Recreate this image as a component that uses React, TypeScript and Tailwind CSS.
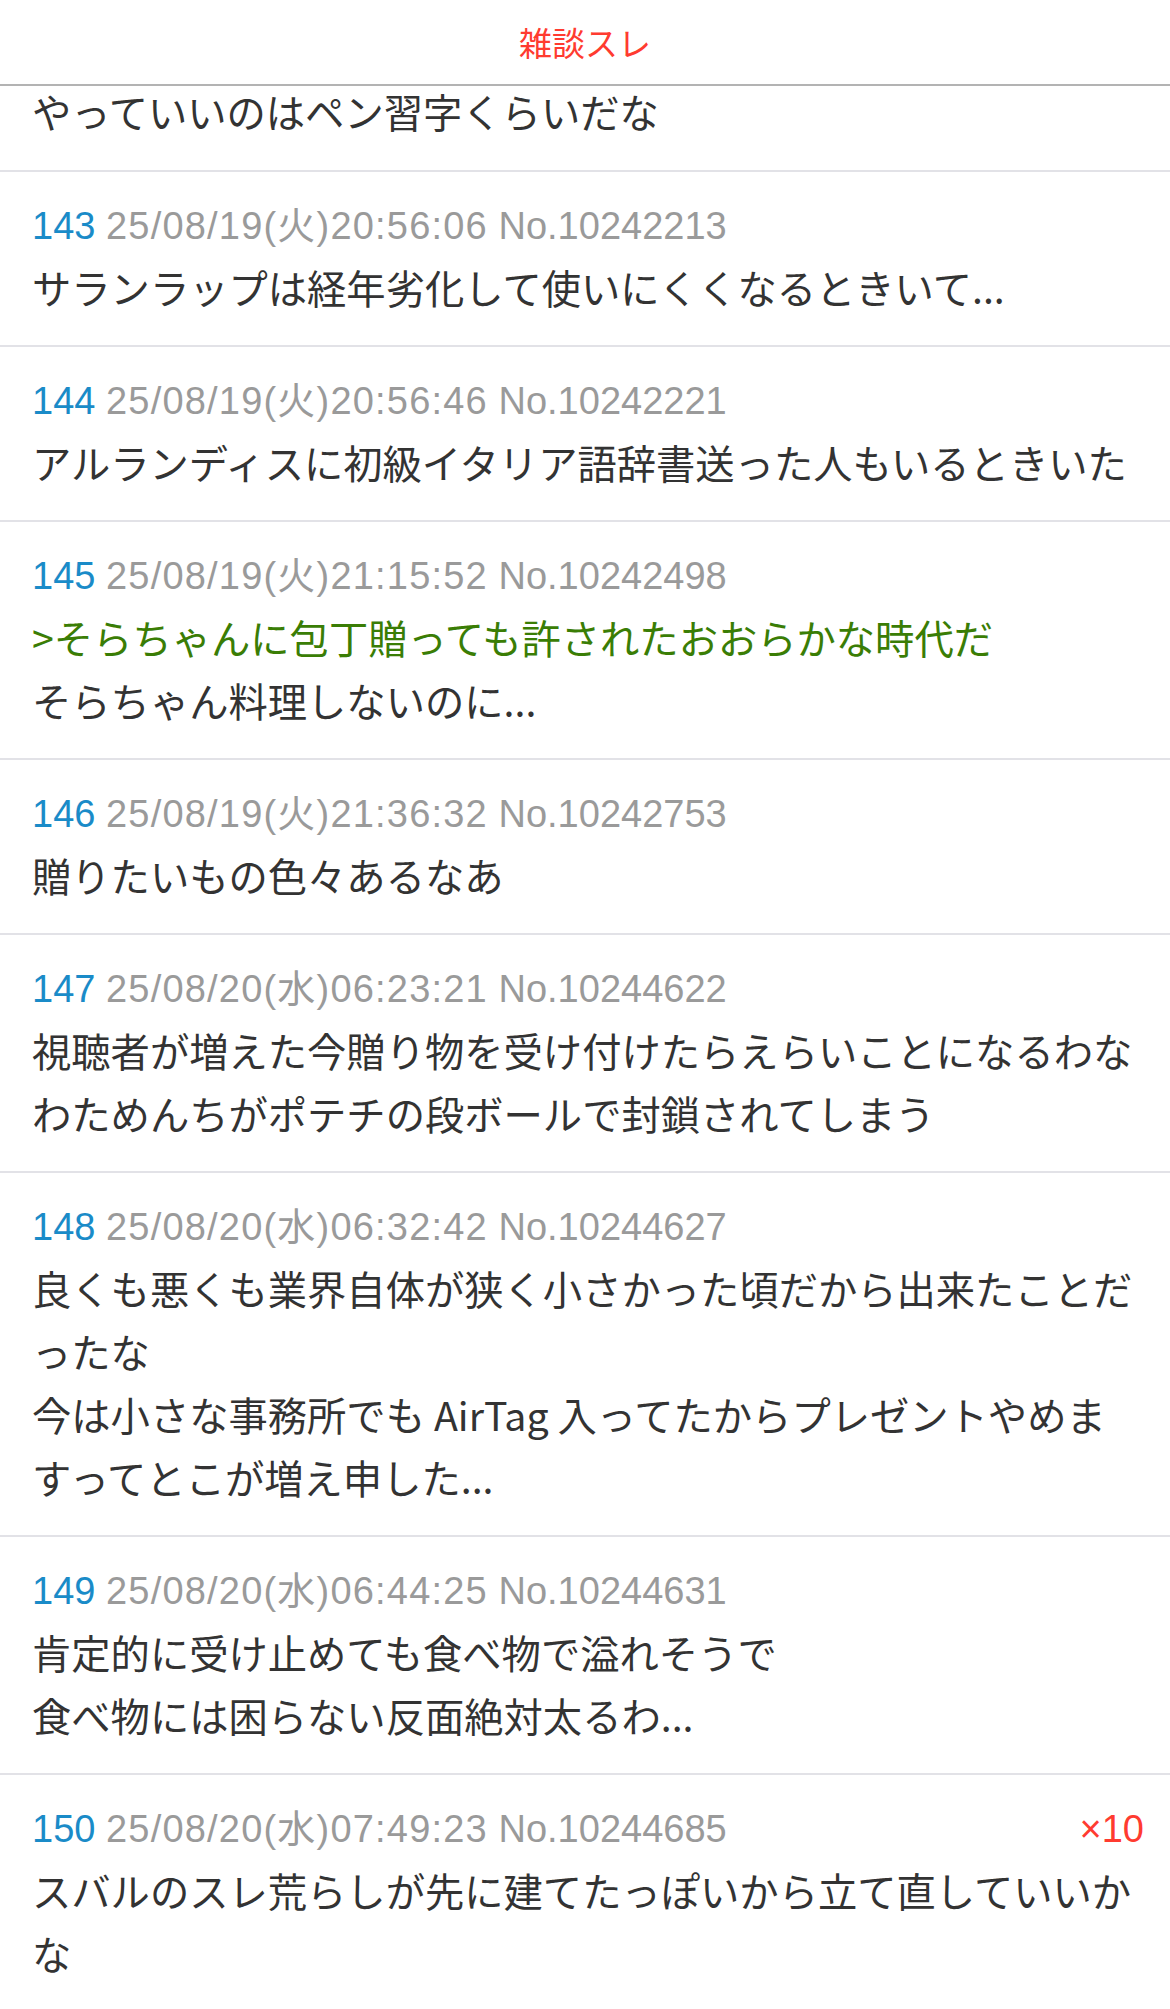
import React from "react";

type Line = { text: React.ReactNode; quote?: boolean };
type Post = {
  no: number;
  date: string;
  id: string;
  lines: Line[];
  badge?: string;
};

const posts: Post[] = [
  {
    no: 143,
    date: "25/08/19(火)20:56:06",
    id: "No.10242213",
    lines: [{ text: "サランラップは経年劣化して使いにくくなるときいて..." }],
  },
  {
    no: 144,
    date: "25/08/19(火)20:56:46",
    id: "No.10242221",
    lines: [{ text: "アルランディスに初級イタリア語辞書送った人もいるときいた" }],
  },
  {
    no: 145,
    date: "25/08/19(火)21:15:52",
    id: "No.10242498",
    lines: [
      { text: ">そらちゃんに包丁贈っても許されたおおらかな時代だ", quote: true },
      { text: "そらちゃん料理しないのに..." },
    ],
  },
  {
    no: 146,
    date: "25/08/19(火)21:36:32",
    id: "No.10242753",
    lines: [{ text: "贈りたいもの色々あるなあ" }],
  },
  {
    no: 147,
    date: "25/08/20(水)06:23:21",
    id: "No.10244622",
    lines: [
      { text: "視聴者が増えた今贈り物を受け付けたらえらいことになるわな" },
      { text: "わためんちがポテチの段ボールで封鎖されてしまう" },
    ],
  },
  {
    no: 148,
    date: "25/08/20(水)06:32:42",
    id: "No.10244627",
    lines: [
      { text: "良くも悪くも業界自体が狭く小さかった頃だから出来たことだ" },
      { text: "ったな" },
      {
        text: (
          <>
            今は小さな事務所でも<span className="px-[9px]">AirTag</span>入ってたからプレゼントやめま
          </>
        ),
      },
      { text: "すってとこが増え申した..." },
    ],
  },
  {
    no: 149,
    date: "25/08/20(水)06:44:25",
    id: "No.10244631",
    lines: [
      { text: "肯定的に受け止めても食べ物で溢れそうで" },
      { text: "食べ物には困らない反面絶対太るわ..." },
    ],
  },
  {
    no: 150,
    date: "25/08/20(水)07:49:23",
    id: "No.10244685",
    badge: "×10",
    lines: [
      { text: "スバルのスレ荒らしが先に建てたっぽいから立て直していいか" },
      { text: "な" },
    ],
  },
];

const jp = "font-['Noto_Sans_CJK_JP',sans-serif]";
const meta = "font-['Liberation_Sans','Noto_Sans_CJK_JP',sans-serif]";

function Divider() {
  return <div className="h-[2px] bg-[#e2e2e7]" />;
}

function Row({ post }: { post: Post }) {
  return (
    <div className="pl-[32px] pr-[26px] pt-[25px] pb-[27px]">
      <div className={`flex justify-between items-center h-[58px] text-[38px] ${meta}`}>
        <div className="whitespace-nowrap">
          <span className="text-[#1a8bc8]">{post.no}</span>
          <span className="text-[#9a9a9a]"> </span>
          <span className="text-[#9a9a9a] tracking-[1.2px]">{post.date}</span>
          <span className="text-[#9a9a9a]"> {post.id}</span>
        </div>
        {post.badge && <span className="text-[#ff3b30]">{post.badge}</span>}
      </div>
      <div className={`${jp} text-[39.3px] leading-[63px]`}>
        {post.lines.map((l, i) => (
          <div
            key={i}
            className={`whitespace-nowrap ${l.quote ? "text-[#3a7d05]" : "text-[#333333]"}`}
          >
            {l.text}
          </div>
        ))}
      </div>
    </div>
  );
}

export default function App() {
  return (
    <div className="min-h-screen bg-white">
      <div className="h-[86px] border-b-2 border-[#b3b3b3] flex items-center justify-center pt-[2px]">
        <span className={`${jp} text-[33px] text-[#ff3b30]`}>雑談スレ</span>
      </div>
      <div className="pl-[32px] pr-[26px] pb-[34px]">
        <div className={`${jp} text-[39.3px] leading-[50px] text-[#333333] whitespace-nowrap`}>
          やっていいのはペン習字くらいだな
        </div>
      </div>
      {posts.map((p) => (
        <div key={p.no}>
          <Divider />
          <Row post={p} />
        </div>
      ))}
    </div>
  );
}
